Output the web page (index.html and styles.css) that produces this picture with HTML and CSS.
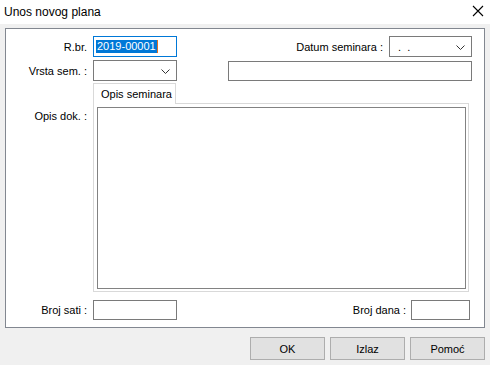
FILE: index.html
```html
<!DOCTYPE html>
<html>
<head>
<meta charset="utf-8">
<link rel="stylesheet" href="styles.css">
</head>
<body>
<div class="window">
  <div class="titlebar">
    <span class="title">Unos novog plana</span>
    <svg class="close" width="12" height="12" viewBox="0 0 12 12"><path d="M1 1 L11 11 M11 1 L1 11" stroke="#000" stroke-width="1.1" fill="none"/></svg>
  </div>
  <div class="panel">
    <div class="row row1">
      <label class="lbl">R.br.</label>
      <div class="field focus w84"><span class="sel">2019-00001</span></div>
      <div class="spacer"></div>
      <label class="lbl-r">Datum seminara :</label>
      <div class="field combo datum"><span class="dots">.&nbsp;&nbsp;.</span><svg class="chev" width="9" height="5" viewBox="0 0 9 5"><path d="M0.5 0.5 L4.5 4.5 L8.5 0.5" stroke="#333" fill="none"/></svg></div>
    </div>
    <div class="row row2">
      <label class="lbl">Vrsta sem. :</label>
      <div class="field combo w84"><span></span><svg class="chev" width="9" height="5" viewBox="0 0 9 5"><path d="M0.5 0.5 L4.5 4.5 L8.5 0.5" stroke="#333" fill="none"/></svg></div>
      <div class="field wide"></div>
    </div>
    <div class="row row3">
      <label class="lbl lbl-top">Opis dok. :</label>
      <div class="tabs">
        <div class="tabstrip"><div class="tab">Opis seminara</div></div>
        <div class="tabpanel"><div class="textarea"></div></div>
      </div>
    </div>
    <div class="row row4">
      <label class="lbl">Broj sati :</label>
      <div class="field w84 h20"></div>
      <div class="spacer"></div>
      <label class="lbl-r lbl-dana">Broj dana :</label>
      <div class="field dana h20"></div>
    </div>
  </div>
  <div class="buttons">
    <button class="btn">OK</button>
    <button class="btn">Izlaz</button>
    <button class="btn">Pomoć</button>
  </div>
</div>
</body>
</html>
```

FILE: styles.css
```css
* { box-sizing: border-box; }
html, body {
  margin: 0;
  padding: 0;
  width: 490px;
  height: 365px;
  overflow: hidden;
  background: #f0f0f0;
  font-family: "Liberation Sans", Arial, sans-serif;
  font-size: 11px;
  color: #000;
}
.window { width: 490px; height: 365px; }
.titlebar {
  height: 24px;
  background: #fff;
  display: flex;
  align-items: center;
  justify-content: space-between;
  padding: 0 6px 1px 4px;
}
.title { font-size: 12px; }
.close { margin-top: -1px; margin-right: 0; }

.panel {
  margin: 4px 5px 0 5px;
  height: 300px;
  background: #fff;
  border: 1px solid #828790;
  padding: 7px 12px 0 0;
}
.row { display: flex; align-items: center; }
.row1 { height: 21px; }
.row2 { height: 21px; margin-top: 3px; }
.row3 { align-items: flex-start; margin-top: 2px; }
.row4 { height: 20px; margin-top: 8px; padding-right: 2px; }
.spacer { flex: 1; }

.lbl {
  width: 81px;
  margin-right: 6px;
  text-align: right;
  flex: none;
}
.lbl-top { margin-top: 27px; }
.lbl-r { margin-right: 6px; }
.lbl-dana { margin-right: 5px; }

.field {
  height: 21px;
  border: 1px solid #7a7a7a;
  background: #fff;
  display: flex;
  align-items: center;
  flex: none;
}
.h20 { height: 20px; }
.w84 { width: 84px; }
.focus { border-color: #0078d7; padding-left: 2px; }
.sel {
  background: #0078d7;
  color: #fff;
  line-height: 13px;
  padding: 0 1px 0 1px;
  border-right: 1px solid #e07020;
}
.combo { justify-content: space-between; padding: 0 6px 0 8px; }
.combo .chev { flex: none; margin-top: 1px; }
.datum { width: 83px; }
.dots { letter-spacing: 0; }
.wide { flex: 1; height: 20px; margin-left: 51px; }
.dana { width: 59px; }

.tabs { width: 376px; flex: none; }
.tabstrip { height: 20px; display: flex; position: relative; z-index: 1; }
.tab {
  width: 83px;
  height: 21px;
  background: #fff;
  border: 1px solid #d9d9d9;
  border-bottom: none;
  display: flex;
  align-items: center;
  padding-left: 7px;
  padding-bottom: 1px;
}
.tabpanel {
  height: 189px;
  border: 1px solid #d9d9d9;
  background: #fff;
  padding: 3px 2px 2px 3px;
}
.textarea {
  height: 100%;
  border: 1px solid #828282;
  background: #fff;
}

.buttons {
  display: flex;
  justify-content: flex-end;
  gap: 5px;
  margin-top: 9px;
  padding-right: 5px;
}
.btn {
  width: 75px;
  height: 23px;
  background: #e1e1e1;
  border: 1px solid #adadad;
  font-family: "Liberation Sans", Arial, sans-serif;
  font-size: 11px;
  color: #000;
  padding: 0;
  margin: 0;
}
```
